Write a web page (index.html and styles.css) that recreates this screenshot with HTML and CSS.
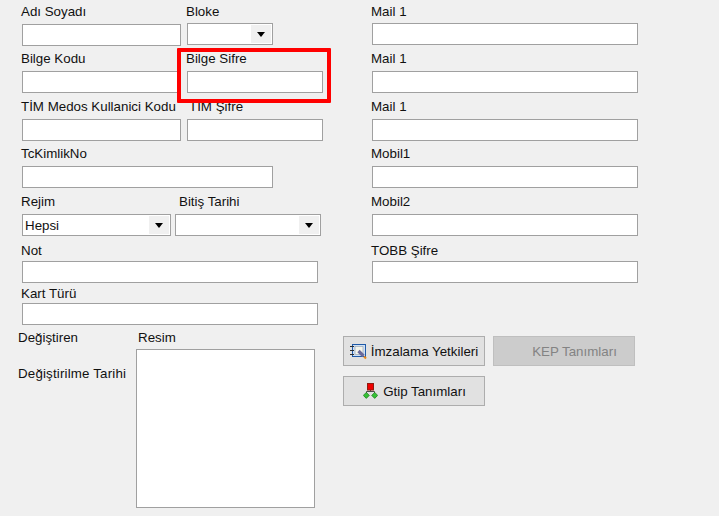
FILE: index.html
```html
<!DOCTYPE html>
<html lang="tr">
<head>
<meta charset="utf-8">
<title>Form</title>
<link rel="stylesheet" href="styles.css">
</head>
<body>
<main class="form">
  <section class="left">
    <div class="row r1">
      <div class="field w159"><label class="lbl">Adı Soyadı</label><input class="inp" type="text"></div>
      <div class="field w86 lift"><label class="lbl g4">Bloke</label><div class="combo"><span class="combo-text"></span><span class="arrow"></span></div></div>
    </div>
    <div class="row r2">
      <div class="field w159"><label class="lbl">Bilge Kodu</label><input class="inp" type="text"></div>
      <div class="field w136"><label class="lbl">Bilge Sifre</label><input class="inp" type="text"></div>
    </div>
    <div class="row r3">
      <div class="field w159"><label class="lbl">TİM Medos Kullanici Kodu</label><input class="inp" type="text"></div>
      <div class="field w136"><label class="lbl shift-s">TİM Şifre</label><input class="inp" type="text"></div>
    </div>
    <div class="row r2">
      <div class="field w251"><label class="lbl">TcKimlikNo</label><input class="inp" type="text"></div>
    </div>
    <div class="row r3 tight">
      <div class="field w149"><label class="lbl">Rejim</label><div class="combo"><span class="combo-text">Hepsi</span><span class="arrow"></span></div></div>
      <div class="field w146"><label class="lbl shift-l">Bitiş Tarihi</label><div class="combo"><span class="combo-text"></span><span class="arrow"></span></div></div>
    </div>
    <div class="row r2">
      <div class="field w296"><label class="lbl g3">Not</label><input class="inp" type="text"></div>
    </div>
    <div class="row r7">
      <div class="field w296"><label class="lbl g2">Kart Türü</label><input class="inp" type="text"></div>
    </div>
    <div class="bottom">
      <div class="meta">
        <div class="meta-line">Değiştiren</div>
        <div class="meta-line second">Değiştirilme Tarihi</div>
      </div>
      <div class="picture-field">
        <div class="pic-label">Resim</div>
        <div class="picture"></div>
      </div>
    </div>
  </section>
  <section class="right">
    <div class="fields">
      <div class="field w266"><label class="lbl g4">Mail 1</label><input class="inp" type="text"></div>
      <div class="field w266"><label class="lbl">Mail 1</label><input class="inp" type="text"></div>
      <div class="field w266"><label class="lbl">Mail 1</label><input class="inp" type="text"></div>
      <div class="field w266"><label class="lbl">Mobil1</label><input class="inp" type="text"></div>
      <div class="field w266"><label class="lbl">Mobil2</label><input class="inp" type="text"></div>
      <div class="field w266"><label class="lbl g3">TOBB Şifre</label><input class="inp" type="text"></div>
    </div>
    <div class="buttons">
      <button class="btn" type="button">
        <svg class="ico" width="17" height="17" viewBox="0 0 17 17" aria-hidden="true">
          <rect x="2.500" y="1.500" width="13" height="12" fill="#cfe0f4" stroke="#1f5aa8"/>
          <rect x="5" y="3.500" width="8" height="8" fill="#f4f4ea" stroke="#9aa7b5" stroke-width=".7"/>
          <path d="M0 3.500h4M0 7.500h4M0 11.500h4" stroke="#2f2f2f"/>
          <path d="M8.500 8l5 5" stroke="#6a6a9c" stroke-width="3.200"/>
          <path d="M14 13.500l2 2" stroke="#e8891a" stroke-width="2"/>
        </svg>
        <span>İmzalama Yetkileri</span>
      </button>
      <button class="btn disabled" type="button" disabled><span>KEP Tanımları</span></button>
      <button class="btn" type="button">
        <svg class="ico gt" width="15" height="16" viewBox="0 0 15 16" aria-hidden="true">
          <path d="M7.500 6v2.500M3.500 10V8.500h8V10" fill="none" stroke="#4d4d4d"/>
          <rect x="4.500" y="0.500" width="6" height="6.500" fill="#f00000" stroke="#8f1b10"/>
          <path d="M3.300 9.400l3 3-3 3-3-3zM11.700 9.400l3 3-3 3-3-3z" fill="#35c035" stroke="#137a13" stroke-width=".7"/>
        </svg>
        <span>Gtip Tanımları</span>
      </button>
    </div>
  </section>
  <div class="highlight"></div>
</main>
</body>
</html>
```
FILE: styles.css
```css
* { box-sizing: border-box; }
html, body { margin: 0; height: 100%; }
body {
  background: #f0f0f0;
  font-family: "Liberation Sans", Arial, sans-serif;
  font-size: 13.33px;
  color: #111;
  overflow: hidden;
}
.form {
  position: relative;
  display: flex;
  width: 719px;
  height: 516px;
}
.left { width: 343px; padding-left: 22px; flex: none; }
.right { flex: 1; }
.row { display: flex; gap: 6px; align-items: flex-end; }
.row.r1 { height: 46px; }
.row.r2 { height: 47px; }
.row.r3 { height: 48px; }
.row.r7 { height: 42px; }
.row.tight { gap: 4px; }
.field { display: flex; flex-direction: column; flex: none; }
.lift { margin-bottom: 1px; }
.w159 { width: 159px; }
.w86 { width: 86px; }
.w136 { width: 136px; }
.w251 { width: 251px; }
.w149 { width: 149px; }
.w146 { width: 146px; }
.w296 { width: 296px; }
.w266 { width: 266px; }
.lbl {
  display: block;
  height: 15px;
  line-height: 15px;
  margin: 0 0 5px -1px;
  white-space: nowrap;
}
.lbl.g4 { margin-bottom: 4px; }
.lbl.g3 { margin-bottom: 3px; }
.lbl.g2 { margin-bottom: 2px; }
.lbl.shift-s { margin-left: 2px; }
.lbl.shift-l { margin-left: 4px; }
.inp {
  display: block;
  width: 100%;
  height: 22px;
  margin: 0;
  padding: 0 3px;
  background: #fff;
  border: 1px solid #a0a0a0;
  border-radius: 0;
  outline: 0;
  font: inherit;
}
.combo {
  display: flex;
  align-items: stretch;
  justify-content: space-between;
  height: 22px;
  padding: 1px;
  background: #fff;
  border: 1px solid #a0a0a0;
}
.combo-text { padding-left: 1px; line-height: 19px; }
.arrow {
  position: relative;
  width: 20px;
  background: #f0f0f0;
  flex: none;
}
.arrow::after {
  content: "";
  position: absolute;
  left: 6px;
  top: 7px;
  border-style: solid;
  border-width: 5px 4.5px 0;
  border-color: #000 transparent transparent;
}
.bottom { display: flex; margin: 3px 0 0 -4px; }
.meta { width: 118px; flex: none; padding-top: 1px; }
.meta-line { height: 15px; line-height: 15px; margin-top: 1px; white-space: nowrap; }
.meta-line.second { margin-top: 21px; letter-spacing: .17px; }
.picture-field { width: 179px; flex: none; }
.pic-label { height: 15px; line-height: 15px; margin: 2px 0 4px 2px; }
.picture { width: 179px; height: 159px; background: #fff; border: 1px solid #a0a0a0; }
.right .fields {
  display: grid;
  grid-template-rows: 45px 48px 48px 47px 48px 47px;
  padding-left: 29px;
}
.right .field { justify-content: flex-end; }
.buttons {
  display: grid;
  grid-template-columns: 142px 142px;
  grid-auto-rows: 30px;
  gap: 10px 8px;
  margin-top: 53px;
}
.btn {
  display: flex;
  align-items: center;
  justify-content: center;
  gap: 4px;
  margin: 0;
  padding: 0;
  background: #e1e1e1;
  border: 1px solid #adadad;
  border-radius: 0;
  color: #111;
  font: inherit;
}
.btn.disabled {
  background: #cccccc;
  border-color: #bfbfbf;
  color: #838383;
  padding-left: 21px;
}
.ico { flex: none; }
.ico.gt { margin: 0 1px 0 1px; }
.highlight {
  position: absolute;
  left: 177px;
  top: 48px;
  width: 154px;
  height: 55px;
  border: 4px solid #f00;
  border-radius: 1px;
  pointer-events: none;
}
```
